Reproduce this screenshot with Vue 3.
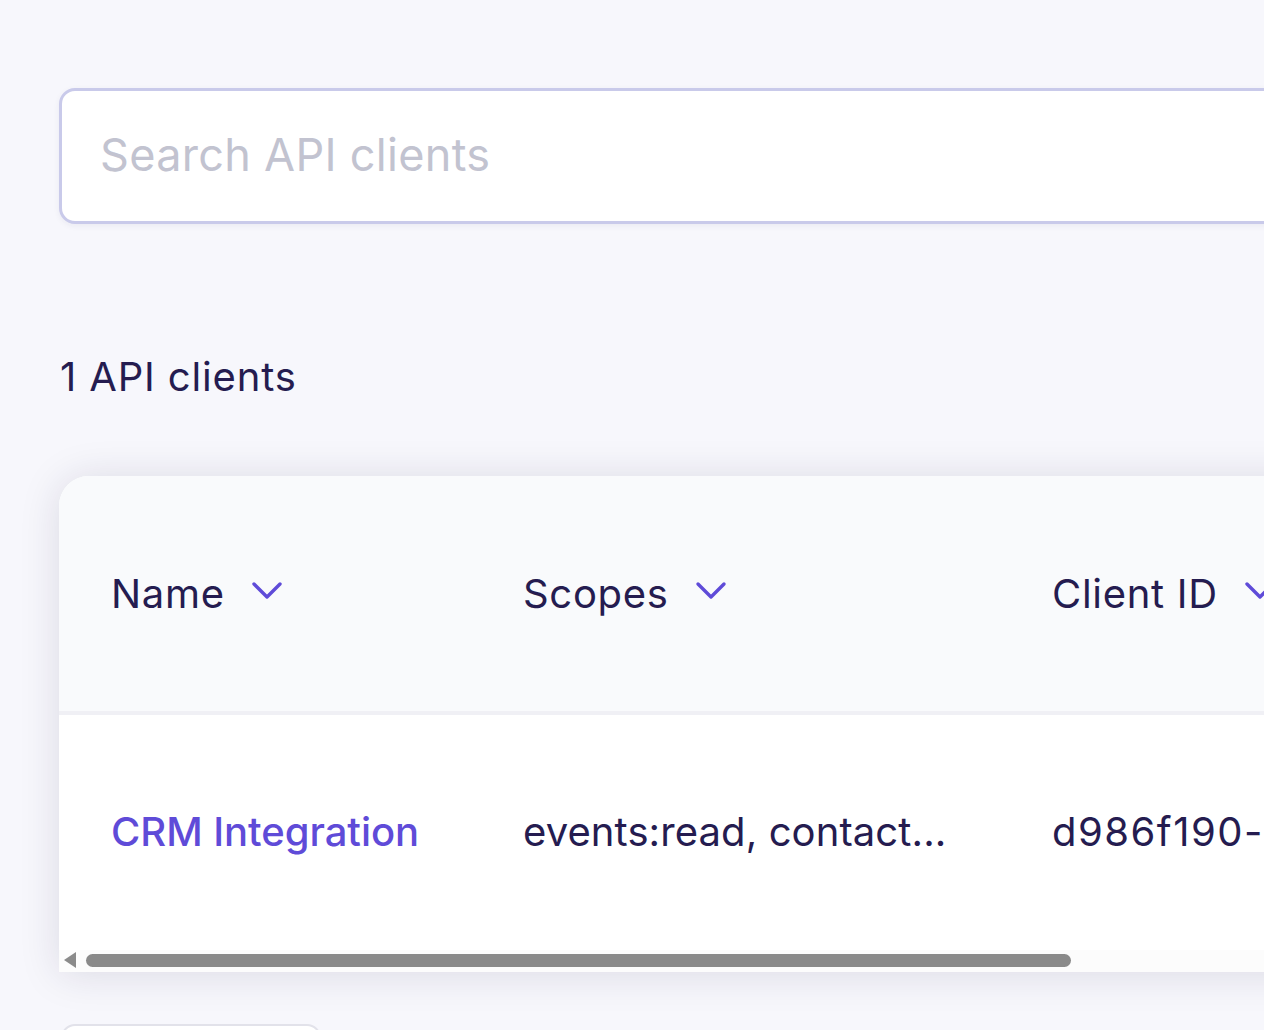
<template>
  <div class="page">
    <div class="search">
      <input class="search-input" type="text" placeholder="Search API clients" />
    </div>

    <div class="count">1 API clients</div>

    <div class="table-card">
      <div class="row head">
        <div v-for="col in columns" :key="col.label" class="cell" :class="col.cls">
          <span>{{ col.label }}</span>
          <svg class="chevron" viewBox="0 0 32 22" fill="none">
            <path d="M3 4 L16 17 L29 4" stroke="#5f4bd8" stroke-width="3.4" stroke-linecap="round" stroke-linejoin="round" />
          </svg>
        </div>
      </div>
      <div class="row body">
        <div class="cell col-name"><a class="link">CRM Integration</a></div>
        <div class="cell col-scopes scopes-text">events:read, contact...</div>
        <div class="cell col-id id-text">d986f190-</div>
      </div>
      <div class="scrollbar">
        <span class="arrow"></span>
        <span class="thumb"></span>
      </div>
    </div>

    <div class="next-btn"></div>
  </div>
</template>

<script setup>
const columns = [
  { label: 'Name', cls: 'col-name' },
  { label: 'Scopes', cls: 'col-scopes' },
  { label: 'Client ID', cls: 'col-id' }
]
</script>

<style>
html, body {
  margin: 0;
  height: 100%;
  overflow: hidden;
  background: #f7f7fc;
}
</style>

<style scoped>
.page {
  width: 1264px;
  height: 1030px;
  box-sizing: border-box;
  padding: 88px 0 0 59px;
  background: #f7f7fc;
  font-family: "Inter", "Liberation Sans", sans-serif;
  color: #251c50;
  overflow: hidden;
}

.search {
  width: 1300px;
  height: 136px;
  box-sizing: border-box;
  background: #fff;
  border: 3px solid #c9caea;
  border-radius: 16px;
  box-shadow: 0 2px 6px rgba(40, 30, 90, 0.06);
}

.search-input {
  width: 100%;
  height: 100%;
  box-sizing: border-box;
  padding: 0 0 4px 38px;
  border: 0;
  outline: 0;
  background: transparent;
  font-family: inherit;
  font-size: 45px;
  letter-spacing: 0.3px;
  color: #251c50;
}

.search-input::placeholder {
  color: #c2c3d0;
  opacity: 1;
}

.count {
  margin: 128px 0 0 1px;
  font-size: 40px;
  line-height: 50px;
  letter-spacing: 0.85px;
}

.table-card {
  width: 1300px;
  margin-top: 74px;
  background: #fff;
  border-top-left-radius: 30px;
  box-shadow: 0 2px 40px rgba(30, 25, 60, 0.13);
  overflow: hidden;
}

.row {
  display: flex;
  align-items: center;
  height: 235px;
  padding-left: 52px;
  font-size: 40px;
}

.head {
  background: #f9fafc;
  border-bottom: 4px solid #f0f0f5;
  letter-spacing: 0.7px;
}

.body {
  box-sizing: border-box;
  padding-bottom: 2px;
}

.cell {
  flex: none;
  display: flex;
  align-items: center;
  white-space: nowrap;
}

.col-name { width: 412px; }
.col-scopes { width: 529px; }

.scopes-text { letter-spacing: 0.1px; }
.id-text { letter-spacing: 1.5px; }

.chevron {
  width: 32px;
  height: 22px;
  margin-left: 26px;
  margin-top: -6px;
}

.link {
  color: #5f4bd8;
  font-weight: 500;
  letter-spacing: -0.05px;
}

.scrollbar {
  display: flex;
  align-items: center;
  height: 22px;
  padding-bottom: 2px;
  box-sizing: border-box;
  background: #fcfcfc;
}

.arrow {
  width: 0;
  height: 0;
  margin-left: 5px;
  border-top: 8px solid transparent;
  border-bottom: 8px solid transparent;
  border-right: 12px solid #8a8a8a;
}

.thumb {
  width: 985px;
  height: 13px;
  margin-left: 10px;
  background: #8a8a8a;
  border-radius: 7px;
}

.next-btn {
  width: 260px;
  height: 60px;
  margin-top: 52px;
  margin-left: 2px;
  box-sizing: border-box;
  background: #fff;
  border: 2px solid #e2e2ea;
  border-radius: 14px;
}
</style>
